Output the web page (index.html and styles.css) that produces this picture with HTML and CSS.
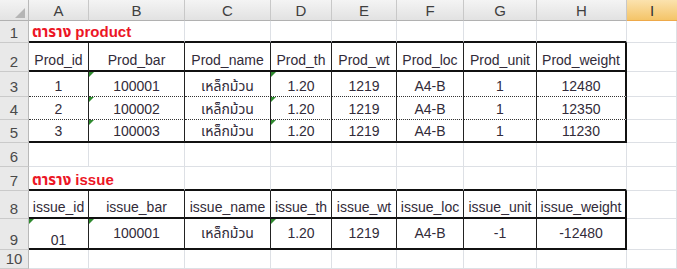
FILE: index.html
```html
<!DOCTYPE html>
<html lang="th">
<head>
<meta charset="utf-8">
<title>Sheet</title>
<link rel="stylesheet" href="styles.css">
</head>
<body>
<div class="sheet">
  <div class="corner"><span class="corner-tri"></span></div>
  <div class="ch">A</div><div class="ch">B</div><div class="ch">C</div><div class="ch">D</div><div class="ch">E</div><div class="ch">F</div><div class="ch">G</div><div class="ch">H</div><div class="ch sel">I</div>

  <div class="rh">1</div>
  <div class="c title span2 tb-bottom">ตาราง product</div><div class="c tb-bottom"></div><div class="c tb-bottom"></div><div class="c tb-bottom"></div><div class="c tb-bottom"></div><div class="c tb-bottom"></div><div class="c tb-bottom"></div><div class="c"></div>

  <div class="rh">2</div>
  <div class="c t hd">Prod_id</div><div class="c t hd">Prod_bar</div><div class="c t hd">Prod_name</div><div class="c t hd">Prod_th</div><div class="c t hd">Prod_wt</div><div class="c t hd">Prod_loc</div><div class="c t hd">Prod_unit</div><div class="c t hd last">Prod_weight</div><div class="c"></div>

  <div class="rh">3</div>
  <div class="c t dot">1</div><div class="c t dot flag">100001</div><div class="c t dot">เหล็กม้วน</div><div class="c t dot flag">1.20</div><div class="c t dot">1219</div><div class="c t dot">A4-B</div><div class="c t dot">1</div><div class="c t dot last">12480</div><div class="c"></div>

  <div class="rh">4</div>
  <div class="c t dot">2</div><div class="c t dot flag">100002</div><div class="c t dot">เหล็กม้วน</div><div class="c t dot flag">1.20</div><div class="c t dot">1219</div><div class="c t dot">A4-B</div><div class="c t dot">1</div><div class="c t dot last">12350</div><div class="c"></div>

  <div class="rh">5</div>
  <div class="c t end">3</div><div class="c t end flag">100003</div><div class="c t end">เหล็กม้วน</div><div class="c t end flag">1.20</div><div class="c t end">1219</div><div class="c t end">A4-B</div><div class="c t end">1</div><div class="c t end last">11230</div><div class="c"></div>

  <div class="rh">6</div>
  <div class="c"></div><div class="c"></div><div class="c"></div><div class="c"></div><div class="c"></div><div class="c"></div><div class="c"></div><div class="c"></div><div class="c"></div>

  <div class="rh">7</div>
  <div class="c title span2 tb-bottom">ตาราง issue</div><div class="c tb-bottom"></div><div class="c tb-bottom"></div><div class="c tb-bottom"></div><div class="c tb-bottom"></div><div class="c tb-bottom"></div><div class="c tb-bottom"></div><div class="c"></div>

  <div class="rh">8</div>
  <div class="c t hd">issue_id</div><div class="c t hd">issue_bar</div><div class="c t hd">issue_name</div><div class="c t hd">issue_th</div><div class="c t hd">issue_wt</div><div class="c t hd">issue_loc</div><div class="c t hd">issue_unit</div><div class="c t hd last">issue_weight</div><div class="c"></div>

  <div class="rh">9</div>
  <div class="c t end flag low">01</div><div class="c t end mid flag">100001</div><div class="c t end mid">เหล็กม้วน</div><div class="c t end mid flag">1.20</div><div class="c t end mid">1219</div><div class="c t end mid">A4-B</div><div class="c t end mid">-1</div><div class="c t end mid last">-12480</div><div class="c"></div>

  <div class="rh">10</div>
  <div class="c"></div><div class="c"></div><div class="c"></div><div class="c"></div><div class="c"></div><div class="c"></div><div class="c"></div><div class="c"></div><div class="c"></div>
</div>
</body>
</html>
```

FILE: styles.css
```css
* { box-sizing: border-box; }

html, body {
  margin: 0;
  padding: 0;
  background: #ffffff;
}

body {
  font-family: "Liberation Sans", Tahoma, "Noto Sans Thai", "Noto Sans", "DejaVu Sans", sans-serif;
  font-size: 14px;
  overflow: hidden;
}

.sheet {
  display: grid;
  grid-template-columns: 29px 60px 96px 86px 61px 65px 67px 73px 90px 50px;
  grid-template-rows: 21px 22px 29px 25px 23px 23px 24px 24px 28px 31px 19px;
  width: 677px;
  height: 269px;
  overflow: hidden;
}

.corner {
  background: linear-gradient(#f3f3f3, #e3e3e3);
  border-right: 1px solid #b9b9b9;
  border-bottom: 1px solid #b1b1b1;
  display: flex;
  justify-content: flex-end;
  align-items: flex-end;
  padding: 0 3px 2px 0;
}

.corner-tri {
  width: 0;
  height: 0;
  border-left: 10px solid transparent;
  border-bottom: 10px solid #b5b5b5;
}

.ch {
  background: linear-gradient(#f4f4f4, #e2e2e2);
  border-right: 1px solid #c8c8c8;
  border-bottom: 1px solid #b1b1b1;
  color: #3f3f3f;
  font-size: 15px;
  display: flex;
  align-items: center;
  justify-content: center;
  padding-top: 2px;
  line-height: 16px;
}

.ch.sel {
  background: linear-gradient(#fbe2ae, #f4c468);
  border-right: none;
  border-bottom-color: #eea94a;
  color: #333;
}

.rh {
  background: #e9e9e9;
  border-right: 1px solid #b9b9b9;
  border-bottom: 1px solid #cacaca;
  color: #4a4a4a;
  font-size: 15px;
  display: flex;
  align-items: flex-end;
  justify-content: center;
  padding-bottom: 1px;
  line-height: 16px;
}

.c {
  border-right: 1px solid #dde0e5;
  border-bottom: 1px solid #dde0e5;
  color: #322b39;
  line-height: 16px;
  white-space: nowrap;
  position: relative;
  min-width: 0;
}

.span2 { grid-column: span 2; }

.title {
  color: #ec1626;
  font-family: Tahoma, "Liberation Sans", "Noto Sans Thai", "DejaVu Sans", sans-serif;
  font-weight: bold;
  font-size: 15px;
  display: flex;
  align-items: flex-end;
  padding: 0 0 1px 3px;
}

.tb-bottom {
  border-bottom: 2px solid #111;
}

.t {
  display: flex;
  justify-content: center;
  align-items: flex-end;
  padding-bottom: 2px;
  border-right: 1px solid #222;
}

.t.last {
  border-right: 2px solid #111;
}

.hd {
  border-bottom: 2px solid #111;
  padding-bottom: 2px;
}

.dot {
  border-bottom: 1px dotted #333;
  padding-bottom: 2px;
}

.end {
  border-bottom: 2px solid #111;
}

.mid {
  align-items: center;
  padding-bottom: 2px;
}

.low {
  padding-bottom: 0;
}

.flag::before {
  content: "";
  position: absolute;
  left: 0;
  top: 0;
  width: 0;
  height: 0;
  border-top: 5px solid #2f8a2f;
  border-right: 5px solid transparent;
}
```
